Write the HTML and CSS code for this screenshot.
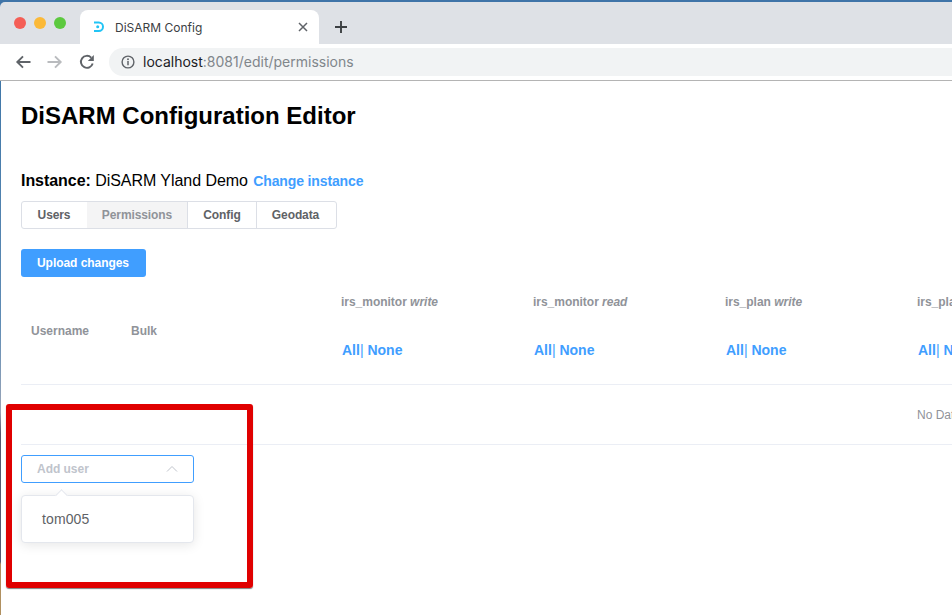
FILE: index.html
```html
<!DOCTYPE html>
<html lang="en">
<head>
    <meta charset="UTF-8">
    <meta name="viewport" content="width=device-width, initial-scale=1.0">
    <title>DiSARM Config</title>
    <link rel="stylesheet" href="styles.css">
</head>
<body>

    <!-- browser frame -->
    <div class="window-top">
    <div class="tabstrip">
        <div class="lights">
            <span class="light red"></span>
            <span class="light yellow"></span>
            <span class="light green"></span>
        </div>
        <div class="tab">
            <svg class="favicon" width="14" height="14" viewBox="0 0 14 14">
                <path d="M2 2.5h4.75a4.25 4.25 0 0 1 0 8.5H2" fill="none" stroke="#22c4f5" stroke-width="2"/>
                <circle cx="5.7" cy="6.7" r="1.5" fill="#22c4f5"/>
            </svg>
            <span class="tab-title">DiSARM Config</span>
            <svg class="tab-close" width="10" height="10" viewBox="0 0 10 10">
                <path d="M1 1l8 8M9 1l-8 8" stroke="#5f6368" stroke-width="1.5"/>
            </svg>
        </div>
        <svg class="new-tab" width="14" height="14" viewBox="0 0 14 14">
            <path d="M7 1v12M1 7h12" stroke="#3c4043" stroke-width="1.9"/>
        </svg>
    </div>
    </div>
    <div class="toolbar">
        <svg class="nav-icon" width="16" height="16" viewBox="0 0 16 16">
            <path d="M15.5 8H2.5M8 2.3L2.3 8 8 13.7" fill="none" stroke="#5f6368" stroke-width="1.9"/>
        </svg>
        <svg class="nav-icon" width="16" height="16" viewBox="0 0 16 16">
            <path d="M.5 8h13M8 2.3L13.7 8 8 13.7" fill="none" stroke="#b9bbbe" stroke-width="1.9"/>
        </svg>
        <svg class="nav-icon" width="16" height="16" viewBox="0 0 16 16">
            <path d="M13.7 9.5A6 6 0 1 1 12.2 3.6" fill="none" stroke="#5f6368" stroke-width="1.9"/>
            <path d="M14.8 1v6H8.8z" fill="#5f6368"/>
        </svg>
        <div class="omnibox">
            <svg width="14" height="14" viewBox="0 0 14 14">
                <circle cx="7" cy="7" r="5.9" fill="none" stroke="#5f6368" stroke-width="1.4"/>
                <path d="M7 6v4.2" stroke="#5f6368" stroke-width="1.5"/>
                <circle cx="7" cy="4.2" r=".95" fill="#5f6368"/>
            </svg>
            <span class="url"><b>localhost</b>:8081/edit/permissions</span>
        </div>
    </div>

    <div class="page">
        <h1>DiSARM Configuration Editor</h1>

        <p class="instance"><b>Instance:</b> DiSARM Yland Demo <a href="#">Change instance</a></p>

        <div class="tabs">
            <label class="tab-users">Users</label>
            <label class="tab-perm active">Permissions</label>
            <label class="tab-config">Config</label>
            <label class="tab-geo">Geodata</label>
        </div>

        <button class="upload">Upload changes</button>

        <div class="table-wrap">
            <table>
                <thead>
                    <tr>
                        <th class="col-user">Username</th>
                        <th class="col-bulk">Bulk</th>
                        <th class="col-perm"><div class="perm-name">irs_monitor <i>write</i></div><div class="links"><a href="#">All</a>| <a href="#">None</a></div></th>
                        <th class="col-perm"><div class="perm-name">irs_monitor <i>read</i></div><div class="links"><a href="#">All</a>| <a href="#">None</a></div></th>
                        <th class="col-perm"><div class="perm-name">irs_plan <i>write</i></div><div class="links"><a href="#">All</a>| <a href="#">None</a></div></th>
                        <th class="col-perm"><div class="perm-name">irs_plan <i>read</i></div><div class="links"><a href="#">All</a>| <a href="#">None</a></div></th>
                    </tr>
                </thead>
            </table>
            <div class="no-data">No Data</div>
        </div>

        <div class="add-user">
            <span>Add user</span>
            <svg width="12" height="12" viewBox="0 0 12 12">
                <path d="M1 8.5l5-5 5 5" fill="none" stroke="#c0c4cc" stroke-width="1"/>
            </svg>
        </div>
    </div>

    <!-- dropdown of the select -->
    <div class="dropdown">
        <div class="arrow"></div>
        <div class="option">tom005</div>
    </div>

    <!-- red box drawn over the screenshot -->
    <div class="highlight"></div>

    <!-- sliver of the desktop along the window's left edge -->
    <div class="desktop-edge"></div>

</body>
</html>
```

FILE: styles.css
```css
html, body{
    margin:0;
    height:100%;
    overflow:hidden;
}

body{
    width:952px;
    height:615px;
    position:relative;
    background-color:white;
    font-family:"Liberation Sans", Arial, sans-serif;
    color:#606266;
}

/* browser frame */
.window-top{
    background-color:#3f74a8;
    padding-top:2px;
}

.tabstrip{
    height:42px;
    background-color:#dee1e6;
    border-radius:5px 0 0 0;
    display:flex;
    align-items:flex-end;
}

.lights{
    display:flex;
    gap:8px;
    padding:0 0 15px 14px;
}

.light{
    width:12px;
    height:12px;
    border-radius:50%;
}
.red{background-color:#f45e56;}
.yellow{background-color:#fbb938;}
.green{background-color:#5cc93f;}

.tab{
    width:239px;
    height:34px;
    margin-left:14px;
    box-sizing:border-box;
    padding:0 11px 0 12px;
    background-color:white;
    border-radius:8px 8px 0 0;
    display:flex;
    align-items:center;
    font-family:"Inter", sans-serif;
    font-size:12px;
    color:#3c4043;
}

.tab-title{
    margin-left:9px;
    flex:1;
}

.new-tab{
    margin:0 0 10px 15px;
}

.toolbar{
    height:36px;
    border-bottom:1px solid #b4b4b4;
    display:flex;
    align-items:center;
    padding-left:15px;
    gap:16px;
}

.nav-icon{
    flex:none;
}

.omnibox{
    flex:1;
    height:28px;
    margin-left:-2px;
    padding-left:12px;
    background-color:#f1f3f4;
    border-radius:14px 0 0 14px;
    display:flex;
    align-items:center;
    gap:8px;
    font-family:"Inter", sans-serif;
    font-size:14px;
    line-height:26px;
    color:#80868b;
}

.url{
    margin-top:-1px;
}

.url b{
    font-weight:normal;
    color:#202124;
}

/* page */
.page{
    padding:0 21px;
}

h1{
    margin:0;
    padding-top:21px;
    font-size:24px;
    line-height:28px;
    color:black;
}

.instance{
    margin:41px 0 0;
    font-size:16px;
    line-height:20px;
    letter-spacing:-.05px;
    color:black;
}

a{
    color:#409eff;
    text-decoration:none;
}

.instance a{
    font-size:14px;
    font-weight:bold;
    letter-spacing:-.13px;
    margin-left:1px;
}

.tabs{
    display:flex;
    margin-top:10px;
    width:316px;
    height:28px;
    box-sizing:border-box;
    border:1px solid #dcdfe6;
    border-radius:3px;
    font-size:12px;
    font-weight:bold;
    letter-spacing:-.1px;
    line-height:26px;
    text-align:center;
}

.tabs label{
    box-sizing:border-box;
    border-left:1px solid #dcdfe6;
}
.tab-users{width:65px; border-left:none !important; padding-right:1px;}
.tab-perm{width:100px;}
.tab-config{width:69px;}
.tab-geo{width:80px; padding-right:2px;}
.tabs .active{
    background-color:#f4f4f5;
    border-left:none;
    color:#909399;
}

.upload{
    display:block;
    margin-top:20px;
    width:125px;
    height:28px;
    padding:0 1px 0 0;
    border:none;
    border-radius:3px;
    background-color:#409eff;
    color:white;
    font-family:inherit;
    font-size:12px;
    font-weight:bold;
    letter-spacing:-.05px;
}

.table-wrap{
    width:931px;
    overflow:hidden;
    border-bottom:1px solid #ebeef5;
}

table{
    border-collapse:collapse;
    table-layout:fixed;
    width:1078px;
}

thead tr{
    height:107px;
    border-bottom:1px solid #ebeef5;
}

th{
    padding:2px 10px 0;
    text-align:left;
    font-size:12px;
    color:#909399;
    vertical-align:middle;
}

.col-user{width:80px;}
.col-bulk{width:190px;}
.col-perm{
    width:172px;
    padding-top:18px;
    vertical-align:top;
}

.perm-name{
    white-space:nowrap;
    font-size:12px;
    letter-spacing:-.02px;
    line-height:14px;
    margin-bottom:33px;
}

.links{
    font-size:14px;
    line-height:16px;
    font-weight:normal;
    white-space:nowrap;
    color:#409eff;
    padding-left:1px;
}
.links a{font-weight:bold;}

.no-data{
    width:1836px;
    height:59px;
    line-height:61px;
    text-align:center;
    font-size:12px;
    color:#909399;
}

.add-user{
    margin-top:10px;
    width:173px;
    height:28px;
    box-sizing:border-box;
    border:1px solid #409eff;
    border-radius:3px;
    padding:0 15px;
    display:flex;
    align-items:center;
    justify-content:space-between;
    font-size:12px;
    font-weight:bold;
    letter-spacing:-.03px;
    color:#c0c4cc;
}

/* overlays */
.dropdown{
    position:absolute;
    left:21px;
    top:495px;
    width:173px;
    height:48px;
    box-sizing:border-box;
    background-color:white;
    border:1px solid #e4e7ed;
    border-radius:4px;
    box-shadow:0 2px 12px rgba(0,0,0,.1);
}

.arrow{
    position:absolute;
    left:35px;
    top:-5px;
    width:8px;
    height:8px;
    background-color:white;
    border-top:1px solid #e4e7ed;
    border-left:1px solid #e4e7ed;
    transform:rotate(45deg);
}

.option{
    padding-left:20px;
    line-height:46px;
    font-size:14px;
    letter-spacing:.1px;
    color:#606266;
}

.highlight{
    position:absolute;
    left:6px;
    top:404px;
    width:235px;
    height:172px;
    border:6px solid #e00000;
    border-radius:3px;
    box-shadow:0 1px 1px rgba(0,0,0,.5);
}

.desktop-edge{
    position:absolute;
    left:0;
    top:81px;
    width:1px;
    height:534px;
    background:linear-gradient(#4077a8, #5f8cb5 45%, #9aa5b8 62%, #555a70 66%, #555a70 90%, #b09060 90.5%);
}
```
